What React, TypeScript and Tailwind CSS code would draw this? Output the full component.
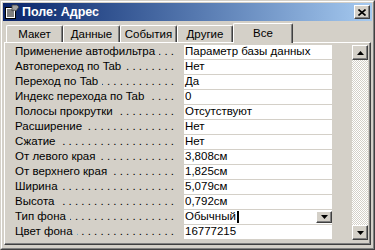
import React from 'react';

const rows: [string, string][] = [
  ['Применение автофильтра', 'Параметр базы данных'],
  ['Автопереход по Tab', 'Нет'],
  ['Переход по Tab', 'Да'],
  ['Индекс перехода по Tab', '0'],
  ['Полосы прокрутки', 'Отсутствуют'],
  ['Расширение', 'Нет'],
  ['Сжатие', 'Нет'],
  ['От левого края', '3,808см'],
  ['От верхнего края', '1,825см'],
  ['Ширина', '5,079см'],
  ['Высота', '0,792см'],
  ['Тип фона', 'Обычный'],
  ['Цвет фона', '16777215'],
];

const tabs = [
  { label: 'Макет', w: 'w-[57px]' },
  { label: 'Данные', w: 'w-[57px]' },
  { label: 'События', w: 'w-[57px]' },
  { label: 'Другие', w: 'w-[56px]' },
];

const DOTS = ' .'.repeat(40);

// classic 3D raised button frame
const raised =
  'border border-t-white border-l-white border-r-[#404040] border-b-[#404040] shadow-[inset_-1px_-1px_#808080] bg-[#d4d0c8]';

const Arrow = ({ down }: { down?: boolean }) => (
  <svg width="7" height="4" viewBox="0 0 7 4">
    {down ? <path d="M0 0h7L3.5 4z" fill="#000" /> : <path d="M0 4h7L3.5 0z" fill="#000" />}
  </svg>
);

const SheetIcon = () => (
  <svg width="16" height="16" viewBox="0 0 16 16">
    <rect x="1.5" y="3.5" width="10" height="11" fill="#fff" stroke="#000" />
    <path d="M3 6h7M3 8h7M3 10h7M3 12h7" stroke="#000" strokeWidth="1" />
    <path d="M8 1h5l2 2-3 4-2-1-2 1z" fill="#a0a0a0" stroke="#404040" strokeWidth="0.8" />
  </svg>
);

export default function App() {
  return (
    <div className="w-[375px] h-[250px] bg-[#d4d0c8] font-['Liberation_Sans',Arial,sans-serif] text-[11.5px] text-black overflow-hidden">
      <div className="h-full w-full border border-t-[#d4d0c8] border-l-[#d4d0c8] border-r-[#404040] border-b-[#404040]">
        <div className="h-full w-full border border-t-white border-l-white border-r-[#808080] border-b-[#808080] p-px flex flex-col">
          {/* title bar */}
          <div className="h-[18px] shrink-0 flex items-center gap-[2px] pl-[1px] pr-[2px] bg-gradient-to-r from-[#0a246a] to-[#a6caf0]">
            <SheetIcon />
            <span className="text-white font-bold text-[12.5px] leading-none">Поле: Адрес</span>
            <button className={`ml-auto w-[16px] h-[14px] flex items-center justify-center ${raised}`}>
              <svg width="8" height="7" viewBox="0 0 8 7">
                <path d="M0.5 0.5l7 6M7.5 0.5l-7 6" stroke="#000" strokeWidth="1.6" />
              </svg>
            </button>
          </div>

          {/* tabs */}
          <div className="h-[21px] shrink-0 flex items-end pl-[3px] relative z-10">
            {tabs.map((t) => (
              <div
                key={t.label}
                className={`${t.w} h-[17px] pt-[2px] flex items-center justify-center border-l border-t border-white border-r border-r-[#404040] shadow-[inset_-1px_0_#808080] rounded-t-[2px]`}
              >
                {t.label}
              </div>
            ))}
            <div className="w-[60px] h-[20px] -mb-px flex items-center justify-center bg-[#d4d0c8] border-l border-t border-white border-r border-r-[#404040] shadow-[inset_-1px_0_#808080] rounded-t-[2px]">
              Все
            </div>
          </div>

          {/* panel */}
          <div className="flex-1 mx-px mb-[2px] flex pt-[2px] pr-[2px] border-l border-t border-white border-r border-b border-r-[#404040] border-b-[#404040] shadow-[inset_-1px_-1px_#808080]">
            <div className="flex flex-col gap-px self-start">
              {rows.map(([label, value], i) => (
                <div key={label} className="flex h-[14px]">
                  <div className="w-[179px] flex items-center pl-[10px] pr-[10px] whitespace-nowrap">
                    <span>{label}</span>
                    <div className="flex-1 min-w-0 overflow-hidden flex justify-end ml-[4px]">
                      <span className="shrink-0">{DOTS}</span>
                    </div>
                  </div>
                  <div className="w-[148px] bg-white flex items-center pl-[1px] whitespace-nowrap">
                    <span>{value}</span>
                    {i === 11 && (
                      <>
                        <span className="w-[2px] h-[12px] bg-black ml-px" />
                        <span className={`ml-auto w-[16px] h-[12px] flex items-center justify-center ${raised}`}>
                          <Arrow down />
                        </span>
                      </>
                    )}
                  </div>
                </div>
              ))}
            </div>

            {/* scrollbar */}
            <div className="ml-auto w-[16px] h-[195px] flex flex-col bg-[repeating-conic-gradient(#d4d0c8_0%_25%,#ffffff_0%_50%)] bg-[length:2px_2px]">
              <div className={`h-[15px] flex items-center justify-center ${raised}`}>
                <Arrow />
              </div>
              <div className="flex-1" />
              <div className={`h-[15px] flex items-center justify-center ${raised}`}>
                <Arrow down />
              </div>
            </div>
          </div>
        </div>
      </div>
    </div>
  );
}
